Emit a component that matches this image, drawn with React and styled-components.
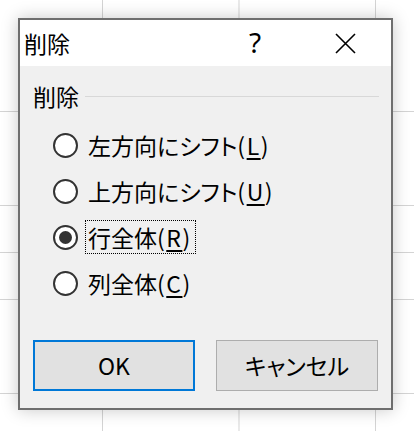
import React from "react";
import styled, { createGlobalStyle } from "styled-components";

const Global = createGlobalStyle`
  html, body { margin: 0; padding: 0; }
  body {
    font-family: "Noto Sans CJK JP", "Noto Sans", sans-serif;
    font-feature-settings: "palt";
    color: #000;
  }
`;

const Sheet = styled.div`
  width: 414px;
  height: 431px;
  box-sizing: border-box;
  padding: 18px 0 0 18px;
  background-color: #fff;
  background-image:
    linear-gradient(to right, #d4d4d4 1px, transparent 1px),
    linear-gradient(to bottom, #d4d4d4 1px, transparent 1px);
  background-size: 136.5px 47px;
  background-position: 102px 17px;
  overflow: hidden;
`;

const Dialog = styled.div`
  width: 375px;
  height: 392px;
  box-sizing: border-box;
  border: 2px solid #6e6e6e;
  background: #f0f0f0;
  box-shadow: 0 0 16px rgba(0, 0, 0, 0.22);
  display: flex;
  flex-direction: column;
`;

const TitleBar = styled.div`
  height: 46px;
  background: #fff;
  display: flex;
  align-items: center;
  padding-left: 4px;
`;

const Title = styled.div`
  flex: 1;
  font-size: 23px;
  line-height: 1;
`;

const Help = styled.div`
  width: 12px;
  font-family: "Noto Sans", sans-serif;
  font-size: 28px;
  line-height: 1;
  margin-right: 74px;
  margin-bottom: 2px;
`;

const Close = styled.div`
  width: 21px;
  height: 21px;
  margin-right: 35px;
  display: flex;
`;

const Body = styled.div`
  flex: 1;
  display: flex;
  flex-direction: column;
  padding: 15px 0 0 13px;
`;

const GroupHeader = styled.div`
  height: 30px;
  display: flex;
  align-items: center;
  gap: 6px;
  padding-right: 12px;
`;

const GroupLabel = styled.span`
  font-size: 23px;
  line-height: 1;
`;

const GroupLine = styled.div`
  flex: 1;
  height: 1px;
  background: #d8d8d8;
`;

const Options = styled.div`
  display: flex;
  flex-direction: column;
  margin-top: 11px;
  padding-left: 20px;
`;

const Row = styled.label`
  height: 46px;
  display: flex;
  align-items: center;
`;

const Circle = styled.span`
  width: 25px;
  height: 25px;
  box-sizing: border-box;
  border: 2px solid #333;
  border-radius: 50%;
  background: #fff;
  display: flex;
  align-items: center;
  justify-content: center;
  margin-right: 8px;
  &::after {
    content: "";
    width: 13px;
    height: 13px;
    border-radius: 50%;
    background: ${(p) => (p.$checked ? "#333" : "transparent")};
  }
`;

const Text = styled.span`
  font-size: 23px;
  line-height: 32px;
  padding: 0 3px 0 2px;
  outline: ${(p) => (p.$focus ? "1px dotted #000" : "none")};
`;

const Key = styled.span`
  letter-spacing: 1.5px;
  u { text-underline-offset: 3px; }
`;

const Buttons = styled.div`
  display: flex;
  gap: 21px;
  margin-top: 34px;
`;

const Button = styled.div`
  width: 162px;
  height: 51px;
  box-sizing: border-box;
  background: #e1e1e1;
  border: ${(p) => (p.$primary ? "2px solid #0078d7" : "1px solid #adadad")};
  display: flex;
  align-items: center;
  justify-content: center;
  font-size: 23px;
  line-height: 1;
`;

const options = [
  { label: "左方向にシフト", key: "L" },
  { label: "上方向にシフト", key: "U" },
  { label: "行全体", key: "R", checked: true },
  { label: "列全体", key: "C" },
];

export default function App() {
  return (
    <>
      <Global />
      <Sheet>
        <Dialog>
          <TitleBar>
            <Title>削除</Title>
            <Help>?</Help>
            <Close>
              <svg width="21" height="21" viewBox="0 0 21 21">
                <path d="M1 1 L20 20 M20 1 L1 20" stroke="#000" strokeWidth="1.6" />
              </svg>
            </Close>
          </TitleBar>
          <Body>
            <GroupHeader>
              <GroupLabel>削除</GroupLabel>
              <GroupLine />
            </GroupHeader>
            <Options>
              {options.map((o) => (
                <Row key={o.key}>
                  <Circle $checked={o.checked} />
                  <Text $focus={o.checked}>
                    {o.label}
                    <Key>
                      (<u>{o.key}</u>)
                    </Key>
                  </Text>
                </Row>
              ))}
            </Options>
            <Buttons>
              <Button $primary>OK</Button>
              <Button>キャンセル</Button>
            </Buttons>
          </Body>
        </Dialog>
      </Sheet>
    </>
  );
}
